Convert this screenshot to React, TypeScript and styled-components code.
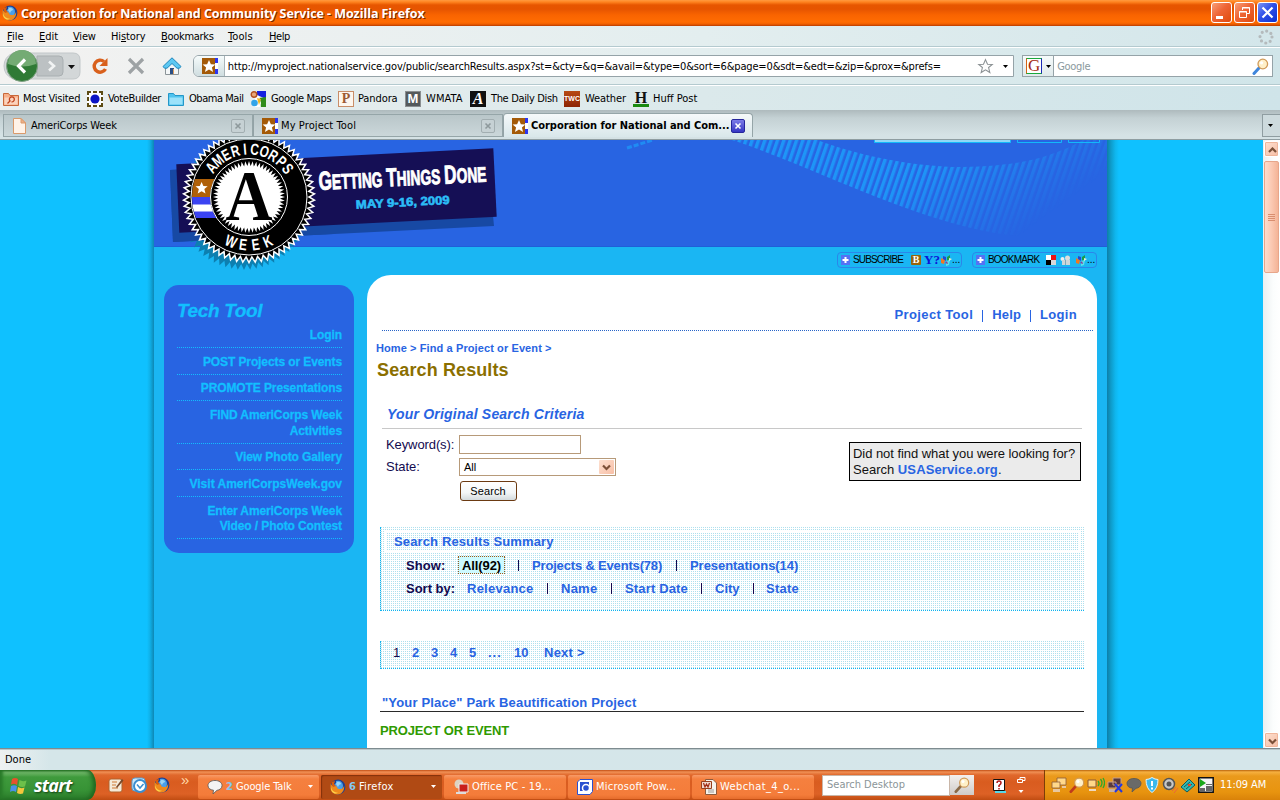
import React from "react";
import styled, { createGlobalStyle, css } from "styled-components";

const ui = `"DejaVu Sans Condensed", "DejaVu Sans", "Liberation Sans", sans-serif`;
const arial = `"Liberation Sans", Arial, sans-serif`;

const Global = createGlobalStyle`
  * { box-sizing: border-box; }
  body { margin: 0; background: #0fc1ff; overflow: hidden; }
  svg { display: block; flex: none; }
`;

const Screen = styled.div`
  width: 1280px;
  height: 800px;
  display: flex;
  flex-direction: column;
  overflow: hidden;
  font: 11px/14px ${ui};
  color: #000;
  white-space: nowrap;
`;

const Label = styled.span<{ $ls?: number }>`
  letter-spacing: ${(p) => p.$ls ?? 0}px;
  flex: none;
`;

/* ---------- Title bar ---------- */
const TitleBar = styled.header`
  height: 26px;
  flex: none;
  display: flex;
  align-items: center;
  padding: 0 2px 0 2px;
  background: linear-gradient(#ff9a40 0, #ff8420 2px, #e75600 5px, #e65400 9px, #f96400 15px, #ff6c02 22px, #f26000 24px, #b93c00 26px);
`;
const TitleText = styled.h1<{ $ls: number }>`
  flex: 1;
  margin: 2px 0 0 3px;
  font: bold 12.5px/20px "Open Sans", sans-serif;
  letter-spacing: ${(p) => p.$ls}px;
  color: #fff;
  text-shadow: 1px 1px 0 #7a2600;
`;
const WinButtons = styled.div`
  display: flex;
  gap: 2px;
  margin-bottom: 1px;
`;
const WinButton = styled.div<{ $blue?: boolean }>`
  width: 21px;
  height: 21px;
  border: 1px solid #fff;
  border-radius: 3px;
  background: ${(p) =>
    p.$blue
      ? "linear-gradient(135deg, #7d95f5, #2f50e8 45%, #0c31d0)"
      : "linear-gradient(135deg, #f8a078, #ee6536 45%, #e04a0c)"};
`;

/* ---------- Menu and toolbars ---------- */
const MenuBar = styled.nav`
  height: 21px;
  flex: none;
  display: flex;
  align-items: center;
  padding: 1px 6px 0 7px;
  background: linear-gradient(90deg, #f3f2f1, #e3eeef 55%, #d3e6ea);
  border-bottom: 1px solid #b4cacf;
`;
const MenuItem = styled.span<{ $w: number; $ls: number }>`
  width: ${(p) => p.$w}px;
  letter-spacing: ${(p) => p.$ls}px;
`;
const Throbber = styled.div`
  margin-left: auto;
`;
const NavBar = styled.div`
  height: 38px;
  flex: none;
  display: flex;
  align-items: center;
  padding: 0 7px 0 3px;
  background: linear-gradient(90deg, #f3f2f1, #e3eeef 55%, #d0e5e9);
  border-top: 1px solid #fff;
  border-bottom: 1px solid #b4cacf;
`;
const ToolIcon = styled.div<{ $w: number }>`
  width: ${(p) => p.$w}px;
  display: flex;
`;
const UrlBar = styled.div`
  width: 822px;
  height: 22px;
  display: flex;
  align-items: center;
  border: 1px solid #95a3a8;
  border-radius: 6px 0 0 6px;
  background: #fff;
  overflow: hidden;
`;
const Identity = styled.div`
  width: 31px;
  height: 20px;
  padding: 2px 0 0 8px;
  border-right: 1px solid #a9b4b8;
  background: linear-gradient(#f6fbfb, #cfdde0);
`;
const UrlText = styled.span<{ $ls: number }>`
  flex: 1;
  padding: 2px 0 0 3px;
  letter-spacing: ${(p) => p.$ls}px;
`;
const SearchBox = styled.div`
  width: 251px;
  height: 22px;
  margin-left: 8px;
  display: flex;
  align-items: center;
  border: 1px solid #95a3a8;
  background: #fff;
  color: #8a999d;
`;
const Engine = styled.div`
  width: 31px;
  height: 20px;
  display: flex;
  align-items: center;
  gap: 4px;
  padding-left: 3px;
  border-right: 1px solid #95a3a8;
  background: linear-gradient(#f6fbfb, #dfe9eb);
`;
const EngineLogo = styled.span`
  width: 16px;
  height: 16px;
  border: 1px solid;
  border-color: #19a83c #1a29b5 #19a83c #d46414;
  background: #fff;
  color: #a32a12;
  font: 17px/14px "Liberation Serif", serif;
  text-align: center;
`;
const BookmarkBar = styled.div`
  height: 25px;
  flex: none;
  display: flex;
  align-items: center;
  padding: 1px 0 0 3px;
  background: linear-gradient(90deg, #ecf0f0, #dbe9eb 55%, #cfe4e9);
  border-top: 1px solid #fff;
`;
const Bookmark = styled.a<{ $w: number; $ls: number; $gap?: number }>`
  width: ${(p) => p.$w}px;
  height: 18px;
  display: flex;
  align-items: center;
  gap: ${(p) => p.$gap ?? 5}px;
  letter-spacing: ${(p) => p.$ls}px;
`;
const LetterIcon = styled.b<{ $bg: string; $fg: string; $font: string; $line?: string }>`
  width: 16px;
  height: 16px;
  flex: none;
  background: ${(p) => p.$bg};
  color: ${(p) => p.$fg};
  font: ${(p) => p.$font};
  letter-spacing: 0;
  text-align: center;
  box-shadow: inset 0 0 0 1px ${(p) => p.$line ?? "transparent"};
`;
const HuffIcon = styled(LetterIcon)`
  border-bottom: 3px solid #198a10;
`;

/* ---------- Tabs ---------- */
const TabStrip = styled.div`
  height: 30px;
  flex: none;
  display: flex;
  align-items: flex-end;
  padding: 0 0 2px 3px;
  background: linear-gradient(#aebabd, #c4d1d4 8px, #d5e2e5 25px);
  border-bottom: 1px solid #8f9da1;
`;
const Tab = styled.div<{ $active?: boolean }>`
  width: 250px;
  height: 23px;
  display: flex;
  align-items: center;
  padding: 0 7px 0 8px;
  border: 1px solid #95a5a8;
  border-left-color: #93a2a6;
  background: linear-gradient(#b9c6c9, #cbd7da);
  ${(p) =>
    p.$active &&
    css`
      height: 24px;
      border-bottom: 0;
      border-radius: 4px 4px 0 0;
      background: linear-gradient(#f5f9fa, #d9e7ea);
      font-weight: bold;
    `}
`;
const TabText = styled.span<{ $ls: number; $pl?: number }>`
  flex: 1;
  padding: 1px 0 0 ${(p) => p.$pl ?? 3}px;
  letter-spacing: ${(p) => p.$ls}px;
`;
const TabList = styled.div`
  width: 18px;
  height: 23px;
  margin-left: auto;
  padding: 9px 0 0 5px;
  border: 1px solid #8f9da1;
  border-right: 0;
  background: #cddadd;
`;
const CloseIcon = styled.span<{ $active?: boolean }>`
  width: 14px;
  height: 14px;
  border: 1px solid ${(p) => (p.$active ? "#26269c" : "#a2aeb1")};
  border-radius: 2px;
  background: ${(p) => (p.$active ? "linear-gradient(#7c7ce8, #3636c4)" : "#c6d1d4")};
`;

/* ---------- Page ---------- */
const Viewport = styled.div`
  height: 608px;
  flex: none;
  display: flex;
  background: #0fc1ff;
`;
const Canvas = styled.div`
  width: 1263px;
  display: flex;
  overflow: hidden;
`;
const Edge = styled.div<{ $right?: boolean }>`
  width: ${(p) => (p.$right ? 12 : 7)}px;
  margin-left: ${(p) => (p.$right ? 0 : 147)}px;
  background: ${(p) =>
    p.$right
      ? "linear-gradient(90deg, #0d7fa8, #0e9dcc 35%, #0fb6ee 70%, #0fc1ff)"
      : "linear-gradient(90deg, #0fc1ff, #0fb2ea 40%, #0e87b4)"};
`;
const Wrapper = styled.div`
  width: 953px;
  height: 700px;
  position: relative;
  background: #1ab6f3;
`;
const Hero = styled.div`
  height: 107px;
  background: #2864e2;
  border-bottom: 1px solid #1f5fd8;
`;
const Badge = styled.svg`
  position: absolute;
  left: 0;
  top: 0;
`;
const ShareRow = styled.div`
  height: 28px;
  display: flex;
  justify-content: flex-end;
  gap: 10px;
  padding: 5px 10px 0 0;
`;
const ShareButton = styled.div`
  width: 125px;
  height: 16px;
  display: flex;
  align-items: center;
  padding-left: 3px;
  border: 1px solid #2b86ea;
  border-radius: 4px;
  font: 10px/14px ${arial};
`;
const ShareText = styled.span<{ $ls: number }>`
  width: 61px;
  padding-left: 3px;
  letter-spacing: ${(p) => p.$ls}px;
`;
const FeedIcons = styled.span`
  width: 29px;
  height: 14px;
  display: flex;
  align-items: center;
  gap: 3px;
  font: bold 13px/14px "Liberation Serif", serif;
  color: #0a14d8;
`;
const BIcon = styled.b`
  width: 10px;
  height: 10px;
  border-radius: 1px;
  background: #96640c;
  color: #fff;
  font: bold 10px/10px "Liberation Serif", serif;
  text-align: center;
`;
const Columns = styled.div`
  display: flex;
  align-items: flex-start;
  padding-left: 10px;
  gap: 13px;
`;
const Side = styled.aside`
  width: 190px;
  height: 268px;
  margin-top: 10px;
  padding: 12px 12px 0 13px;
  border-radius: 15px;
  background: #2864e2;
  color: #12bfff;
  font: bold 12px/16px ${arial};
`;
const SideTitle = styled.h2`
  margin: 0;
  font: italic bold 19px/28px ${arial};
  letter-spacing: -0.35px;
  -webkit-text-stroke: 0.3px #12bfff;
`;
const SideItem = styled.a<{ $h: number; $lh?: number; $ls?: number }>`
  display: flex;
  flex-direction: column;
  justify-content: flex-end;
  height: ${(p) => p.$h}px;
  line-height: ${(p) => p.$lh ?? 16}px;
  padding-bottom: 5px;
  text-align: right;
  letter-spacing: ${(p) => p.$ls ?? -0.1}px;
  -webkit-text-stroke: 0.3px #12bfff;
  background: repeating-linear-gradient(90deg, #12bfff 0 1px, transparent 1px 2px) bottom / 100% 1px no-repeat;
`;
const Main = styled.main`
  width: 730px;
  height: 520px;
  border-radius: 24px 24px 0 0;
  background: #fff;
  color: #120a4f;
  font: 13px/16px ${arial};
`;
const TopNav = styled.nav`
  height: 56px;
  margin: 0 4px 0 15px;
  display: flex;
  justify-content: flex-end;
  align-items: flex-end;
  gap: 9px;
  padding: 0 16px 8px 0;
  font-weight: bold;
  color: #2864e2;
  background: repeating-linear-gradient(90deg, #2864c8 0 1px, transparent 1px 2px) bottom / 100% 1px no-repeat;
`;
const NavSep = styled.span`
  width: 1px;
  height: 12px;
  margin-bottom: 1px;
  background: #2864e2;
`;
const Crumbs = styled.div`
  margin: 10px 0 0 9px;
  font: bold 11px/14px ${arial};
  letter-spacing: 0.1px;
  color: #2864e2;
`;
const PageTitle = styled.h2`
  margin: 3px 0 0 10px;
  font: bold 18px/24px ${arial};
  letter-spacing: 0.12px;
  color: #8b6f00;
`;
const Criteria = styled.h3`
  height: 25px;
  margin: 22px 15px 0 15px;
  padding-left: 5px;
  border-bottom: 1px solid #c8c8c8;
  font: italic bold 14px/20px ${arial};
  letter-spacing: 0.2px;
  color: #2864e2;
`;
const FormArea = styled.div`
  height: 98px;
  display: flex;
  justify-content: space-between;
  padding: 6px 16px 0 19px;
`;
const FormRow = styled.div<{ $h: number; $mb: number }>`
  height: ${(p) => p.$h}px;
  margin-bottom: ${(p) => p.$mb}px;
  display: flex;
  align-items: center;
`;
const FormLabel = styled.label<{ $ls?: number }>`
  width: 73px;
  letter-spacing: ${(p) => p.$ls ?? -0.1}px;
`;
const TextInput = styled.div`
  width: 122px;
  height: 19px;
  border: 1px solid #b79a79;
`;
const Select = styled.div`
  width: 157px;
  height: 18px;
  display: flex;
  align-items: center;
  justify-content: space-between;
  padding: 0 1px 0 4px;
  border: 1px solid #b79a79;
  font: 11px/14px ${arial};
  color: #000;
`;
const ArrowBox = styled.span`
  width: 15px;
  height: 14px;
  padding: 4px 0 0 3px;
  border-radius: 1px;
  background: linear-gradient(135deg, #fde0d0, #f8bfa6);
`;
const Button = styled.button`
  width: 57px;
  height: 20px;
  margin-left: 74px;
  padding: 0 1px 0 0;
  border: 1px solid #6b3a12;
  border-radius: 3px;
  background: linear-gradient(#fff, #f3f6f7 60%, #d3dadd);
  font: 11px/16px ${arial};
  letter-spacing: 0.1px;
  color: #000;
`;
const Notice = styled.div`
  width: 232px;
  height: 39px;
  margin-top: 7px;
  padding: 3px;
  border: 1px solid #000;
  background: #ebebeb;
  color: #111;
`;
const Link = styled.a<{ $ls?: number }>`
  color: #2864e2;
  font-weight: bold;
  letter-spacing: ${(p) => p.$ls ?? 0}px;
`;
const dots = css`
  background-color: #fff;
  background-image:
    repeating-linear-gradient(90deg, transparent 0 1px, #fff 1px 2px),
    repeating-linear-gradient(#aee0ee 0 1px, #fff 1px 2px);
`;
const DotBox = styled.section<{ $h: number; $mb: number; $pt?: number }>`
  ${dots}
  width: 704px;
  height: ${(p) => p.$h}px;
  margin: 0 0 ${(p) => p.$mb}px 13px;
  padding: ${(p) => p.$pt ?? 0}px 0 0 3px;
  border-bottom: 1px dotted #10b4f0;
  border-left: 1px dotted #10b4f0;
`;
const BoxTitle = styled.h4`
  width: 697px;
  height: 21px;
  margin: 0 0 2px;
  padding-left: 8px;
  border: 2px solid #fff;
  font: bold 13px/17px ${arial};
  letter-spacing: 0.13px;
  color: #2864e2;
`;
const FilterRow = styled.div`
  height: 23px;
  display: flex;
  align-items: center;
  padding-left: 22px;
  font-weight: bold;
`;
const Cell = styled.span<{ $w: number; $ls?: number; $link?: boolean }>`
  width: ${(p) => p.$w}px;
  letter-spacing: ${(p) => p.$ls ?? 0.25}px;
  color: ${(p) => (p.$link ? "#2864e2" : "#120a4f")};
`;
const PageNow = styled(Cell)`
  font-weight: normal;
`;
const Bar = styled.span<{ $w: number }>`
  width: ${(p) => p.$w}px;
  height: 11px;
  border-left: 1px solid #120a4f;
`;
const Current = styled.span`
  width: 47px;
  height: 18px;
  margin: 0 13px 1px 0;
  padding-left: 3px;
  border: 1px dotted #9c5a1c;
  background: #cdfaff;
  color: #000;
  line-height: 18px;
  letter-spacing: -0.1px;
`;
const Pager = styled.div`
  height: 24px;
  display: flex;
  align-items: center;
  padding-left: 9px;
  font-weight: bold;
`;
const ResultTitle = styled.h4`
  width: 704px;
  height: 17px;
  margin: 0 0 0 13px;
  padding-left: 2px;
  border-bottom: 1px solid #2a2a2a;
  font: bold 13px/16px ${arial};
  letter-spacing: 0.17px;
  color: #2864e2;
`;
const ResultKind = styled.div`
  margin: 11px 0 0 13px;
  font-weight: bold;
  letter-spacing: -0.15px;
  color: #2f9a00;
`;

/* ---------- Scrollbar ---------- */
const Scrollbar = styled.div`
  width: 17px;
  display: flex;
  flex-direction: column;
  padding: 1px 1px 0 1px;
  background: linear-gradient(90deg, #eceff0, #fbfdfd 60%, #fff);
`;
const ScrollButton = styled.div`
  height: 16px;
  padding: 5px 0 0 3px;
  border: 1px solid #fff;
  border-radius: 2px;
  background: linear-gradient(135deg, #fde0d0, #f6bda4);
  box-shadow: inset 0 0 0 1px #efb59a;
`;
const Thumb = styled.div`
  height: 112px;
  margin: 4px 0 auto;
  display: flex;
  flex-direction: column;
  align-items: center;
  justify-content: center;
  gap: 1px;
  border: 1px solid #e7a68b;
  border-radius: 2px;
  background: linear-gradient(90deg, #fddccb, #fbc9b3 50%, #f4b497);
`;
const Grip = styled.span`
  width: 7px;
  height: 1px;
  background: #d98e70;
`;

/* ---------- Status bar ---------- */
const StatusBar = styled.footer`
  height: 22px;
  flex: none;
  padding: 4px 0 0 5px;
  border-top: 1px solid #7e8c90;
  background: linear-gradient(90deg, #eef1f1, #d5e6e9 50px, #d5e6ea);
  box-shadow: inset 0 1px 0 #b9c7ca;
`;

/* ---------- Taskbar ---------- */
const Taskbar = styled.div`
  height: 30px;
  flex: none;
  display: flex;
  align-items: center;
  color: #fff;
  background: linear-gradient(#c24e14 0, #f09055 2px, #e0682c 5px, #d95c1f 12px, #dd6125 24px, #c04c12 30px);
`;
const Start = styled.div`
  width: 96px;
  height: 30px;
  display: flex;
  align-items: center;
  padding: 0 0 0 10px;
  gap: 6px;
  border-radius: 0 9px 9px 0 / 0 15px 15px 0;
  background: linear-gradient(#2a7a26 0, #78bd70 2px, #3f9a3c 7px, #379336 20px, #2a7a2a 30px);
  box-shadow: inset -3px 0 4px #1f661f, inset 3px 0 3px #2b7e2b;
  font: italic bold 18px/22px "Open Sans", sans-serif;
  text-shadow: 1px 1px 2px #123f12;
`;
const QuickLaunch = styled.div`
  width: 102px;
  height: 30px;
  display: flex;
  align-items: center;
  gap: 7px;
  padding-left: 12px;
`;
const Chevrons = styled.span`
  margin: -10px 0 0 4px;
  font: 15px/14px ${arial};
  color: #ffd9a8;
`;
const TaskButton = styled.div<{ $w: number; $active?: boolean }>`
  width: ${(p) => p.$w}px;
  height: 24px;
  margin: 3px 2px 0 0;
  display: flex;
  align-items: center;
  gap: 3px;
  padding: 0 6px 0 9px;
  border-radius: 2px;
  background: ${(p) =>
    p.$active ? "#b04a14" : "linear-gradient(#f79a68, #f5803f 4px, #f47c3a 20px, #e56c2c)"};
  box-shadow: ${(p) => (p.$active ? "inset 1px 1px 1px #83310a" : "none")};
`;
const Count = styled.b`
  color: #86c8f0;
`;
const Push = styled.span`
  margin-left: auto;
`;
const DesktopSearch = styled.div`
  width: 128px;
  height: 21px;
  margin-left: 6px;
  padding: 2px 4px;
  background: #fff;
  border: 1px solid #c9b6a8;
  color: #8b9598;
`;
const SearchGo = styled.div`
  width: 24px;
  height: 20px;
  padding: 2px 4px;
  background: linear-gradient(#f3f0ee, #cfcbc8);
`;
const Langbar = styled.div`
  flex: 1;
  display: flex;
  align-items: center;
  gap: 11px;
  padding-left: 18px;
`;
const Tray = styled.div`
  width: 236px;
  height: 30px;
  display: flex;
  align-items: center;
  gap: 2px;
  padding-left: 6px;
  border-left: 1px solid #7c3d08;
  background: linear-gradient(#b9640c 0, #f6b040 2px, #ea9a1c 6px, #e8940f 22px, #d98209 30px);
`;
const Clock = styled.span<{ $ls: number }>`
  margin-left: 4px;
  letter-spacing: ${(p) => p.$ls}px;
`;

/* ---------- Icons ---------- */
const Firefox = ({ s = 16 }: { s?: number }) => (
  <svg width={s} height={s} viewBox="0 0 16 16">
    <circle cx="8" cy="8" r="7.4" fill="#1a3f94" />
    <path d="M6 2c4-1 7 1 7 5 0 3-2 5-4 5s-5-1-5-4 1-3 2-4z" fill="#4aa0ea" />
    <path d="M7 3c2-.6 4 .5 4 2L9 6 8 8 6 5z" fill="#9ad4f5" />
    <path d="M1 4c0 2 1 3 3 3 1 0 3 0 3 1 0 2 2 2 4 2 2-.5 3-2 3-4 1 5-2 9.4-6.500 9.400C3 15.400.2 12 .4 8 .4 6.500.8 5 1 4z" fill="#f08a1c" />
    <path d="M1.200 8c.5 4 4 6 7 5.600-3 2.400-8 0-7-5.600z" fill="#ffd24a" />
    <path d="M2 3l3-1-1 3 2 2-3 1-1-2z" fill="#d95d0c" />
  </svg>
);
const starPath = "M8 1.500l1.900 4.300 4.500.3-3.500 2.900 1.200 4.700L8 11.200l-4.100 2.500 1.200-4.700L1.600 6.100l4.500-.3z";
const CorpsIcon = () => (
  <svg width="16" height="16">
    <path d="M0 0h13v16H0z" fill="#a45a08" />
    <path d="M13 0h3v5h-3zM13 11h3v5h-3z" fill="#2d35f0" />
    <path d="M13 5h3v6h-3z" fill="#fff" />
    <path d={starPath} transform="translate(-1 .4)" fill="#fff" />
  </svg>
);
const Caret = ({ c = "#000" }: { c?: string }) => (
  <svg width="5" height="3">
    <path d="M0 0h5L2.500 3z" fill={c} />
  </svg>
);
const Cross = ({ c }: { c: string }) => (
  <svg width="12" height="12">
    <path d="M3.500 3.500l5 5m0-5l-5 5" stroke={c} strokeWidth="1.600" />
  </svg>
);
const ChevronDown = ({ up }: { up?: boolean }) => (
  <svg width="9" height="7" viewBox="0 0 9 7">
    <path d={up ? "M1 5l3.500-3.500L8 5" : "M1 1.500L4.500 5 8 1.500"} stroke="#7c5038" strokeWidth="2.200" fill="none" />
  </svg>
);
const Magnifier = ({ handle, s = 17 }: { handle: string; s?: number }) => (
  <svg width={s} height={s} viewBox="0 0 17 17">
    <path d="M7 10l-5 5.500" stroke={handle} strokeWidth="3" strokeLinecap="round" />
    <circle cx="10.800" cy="6" r="4.800" fill="#fff0c8" stroke="#d09a58" strokeWidth="1.300" />
    <circle cx="9.600" cy="4.800" r="1.600" fill="#fff" />
  </svg>
);
const Folder = ({ warm }: { warm?: boolean }) => (
  <svg width="16" height="16">
    <path d="M.5 14.500v-12h5l1.500 2h8.500v10z" fill={warm ? "#f7b08a" : "#4fc3ee"} stroke={warm ? "#c9683a" : "#2397c8"} />
    <path d="M1.500 6.500h13v7h-13z" fill={warm ? "#fbd3bd" : "#9be2fa"} />
    {warm && <path d="M4.500 12.500L7 10a2.500 2.500 0 1 1 1.500.8" fill="none" stroke="#c0431c" strokeWidth="1.300" />}
  </svg>
);
const VoteIcon = () => (
  <svg width="16" height="16">
    <path d="M0 0h16v16H0z" fill="#fff" />
    <path d="M0 0h4v2H2v2H0zM6 0h4v2H6zM12 0h4v4h-2V2h-2zM0 6h2v4H0zM14 6h2v4h-2zM0 12h2v2h2v2H0zM6 14h4v2H6zM14 12h2v4h-4v-2h2z" fill="#5d4c14" />
    <circle cx="8" cy="8" r="4.600" fill="#0c14c4" />
  </svg>
);
const MapsIcon = () => (
  <svg width="16" height="16">
    <path d="M7 0h9v8L7 4z" fill="#1420e0" />
    <path d="M9 7l7-1v10h-5z" fill="#2f8c1c" />
    <path d="M5 4l4 1 2 7-1 4H4z" fill="#fff" />
    <circle cx="4" cy="3.500" r="2.800" fill="#e8a878" stroke="#b3501c" strokeWidth="1.400" />
    <circle cx="4.500" cy="12" r="3.300" fill="#32a4e8" />
    <path d="M7 7l4 1-2 6z" fill="#f2b61c" />
  </svg>
);
const PageIcon = () => (
  <svg width="14" height="16">
    <path d="M1.500.5H9l4.500 4.500v10.500h-12z" fill="#fff3e8" stroke="#d99a6c" />
    <path d="M9 .5V5h4.500z" fill="#f0b088" stroke="#d99a6c" />
  </svg>
);
const Bubble = ({ f }: { f: string }) => (
  <svg width="16" height="16">
    <path d="M8 1.500c4 0 7 2 7 5s-2.500 4.500-5 4.800L6 15l.5-3.800C3 11 1 9 1 6.500c0-3 3-5 7-5z" fill={f} stroke="#555" strokeWidth=".8" />
  </svg>
);
const Plus = () => (
  <svg width="9" height="10">
    <path d="M0 0h9v10H0z" fill="#5472f4" />
    <path d="M4.500 2v6M1.500 5h6" stroke="#fff" strokeWidth="2" />
  </svg>
);
const Butterfly = () => (
  <svg width="12" height="11">
    <path d="M1 3l4 2-1 4-3-1z" fill="#f07820" />
    <path d="M3 1l3 1v4L3 4z" fill="#2848d0" />
    <path d="M7 2l3-2v4L7 6z" fill="#1c9c48" />
    <path d="M6 6l4-1-1 5-3 1z" fill="#5ce0e8" />
    <path d="M9 3l3 1-3 2z" fill="#e8f0d0" />
    <path d="M5 8l2-2 1 3z" fill="#8a3a9c" />
  </svg>
);
const Dual = ({ a, b }: { a: string; b: string }) => (
  <svg width="16" height="16">
    <path d="M6 1h9v7H6z" fill={a} stroke="#8c5a38" strokeWidth=".8" />
    <path d="M1 5h8v6H1z" fill={a} stroke="#8c5a38" strokeWidth=".8" />
    <path d="M2 12h7v3H2zM11 9h4v2h-4z" fill={b} />
  </svg>
);

/* ---------- Hero artwork ---------- */
const CX = 95;
const CY = 57;
const burst = (n: number, outer: number, inner: number) =>
  Array.from({ length: n * 2 }, (_, i) => {
    const a = (Math.PI * i) / n;
    const r = i % 2 ? inner : outer;
    return `${(CX + r * Math.sin(a)).toFixed(2)},${(CY - r * Math.cos(a)).toFixed(2)}`;
  }).join(" ");
const polar = (r: number, deg: number) => {
  const a = (deg * Math.PI) / 180;
  return `${CX + r * Math.sin(a)} ${CY - r * Math.cos(a)}`;
};

/* Condensed lettering set around the seal, one letter per angle. */
const ArcLetters = ({ word, from, to, r, flip }: { word: string; from: number; to: number; r: number; flip?: boolean }) => (
  <g>
    {word.split("").map((ch, i) => {
      const deg = from + ((to - from) * i) / (word.length - 1);
      const rot = flip ? deg - 180 : deg;
      return (
        <text
          key={i}
          textAnchor="middle"
          transform={`translate(${polar(r, deg)}) rotate(${rot}) scale(.74 1)`}
        >
          {ch}
        </text>
      );
    })}
  </g>
);

const HeroArt = () => (
  <Badge width="953" height="135" viewBox="0 0 953 135">
    <defs>
      <pattern id="stripes" width="6" height="20" patternUnits="userSpaceOnUse" patternTransform="rotate(19)">
        <path d="M0 0h3.400v20H0z" fill="#1e97f8" />
      </pattern>
      <linearGradient id="fade" x1="0" x2="1" y1="0" y2=".3">
        <stop offset="0" stopColor="#fff" />
        <stop offset=".65" stopColor="#fff" stopOpacity=".95" />
        <stop offset=".92" stopColor="#fff" stopOpacity=".22" />
        <stop offset="1" stopColor="#fff" stopOpacity="0" />
      </linearGradient>
      <mask id="waveFade">
        <path d="M470 0h483v106H470z" fill="url(#fade)" />
      </mask>
      <clipPath id="ring">
        <path
          clipRule="evenodd"
          d={`M${CX - 57} ${CY}a57 57 0 1 0 114 0a57 57 0 1 0-114 0zM${CX - 39} ${CY}a39 39 0 1 1 78 0a39 39 0 1 1-78 0z`}
        />
      </clipPath>
    </defs>
    <path
      mask="url(#waveFade)"
      fill="url(#stripes)"
      d="M578 0C630 17 700 50 763 72C806 87 850 98 890 97C920 92 945 60 953 20V0H929C890 22 850 27 799 27C750 25 700 14 663 0z"
    />
    <path d="M473 8l26-8" stroke="#1e97f8" strokeWidth="3" strokeDasharray="5 2" opacity=".8" />
    <path d="M720.500-1v3.500h136V-1z" fill="#8fd6f6" stroke="#12b9fa" />
    <path d="M863.500-1v3.500h44V-1M914.500-1v3.500h31V-1" fill="none" stroke="#12b9fa" />

    <path d="M16 30l317-16 7 72-321 16z" fill="#1749a4" />
    <polygon points={burst(66, 66, 60)} transform="translate(-5 7)" fill="#0d7fb0" />
    <path d="M16 30l163-8v72L19 102z" fill="#1749a4" />
    <path d="M22.300 24.300L339.300 8.300 342.700 76.700 25.300 92.700z" fill="#150f55" />
    <polygon points={burst(66, 65.5, 60)} fill="#000" stroke="#fff" strokeWidth="1.500" />
    <circle cx={CX} cy={CY} r="58" fill="#000" stroke="#fff" strokeWidth="1" />
    <g clipPath="url(#ring)">
      <path d="M30 39h32v18H30z" fill="#b06008" />
      <path d="M30 57h32v21H30z" fill="#3b43f2" />
      <path d="M30 64.500h32v7H30z" fill="#fff" />
      <path d={starPath} transform="translate(40 40.500) scale(.95)" fill="#fff" />
    </g>
    <circle cx={CX} cy={CY} r="38.500" fill="#000" stroke="#fff" />
    <polygon points={burst(60, 36, 31)} fill="#fff" />
    <text x={CX} y="79.500" textAnchor="middle" textLength="47" lengthAdjust="spacingAndGlyphs" fontFamily="Liberation Serif, serif" fontWeight="bold" fontSize="71">
      A
    </text>
    <g fill="#fff" fontFamily="Liberation Sans, sans-serif" fontWeight="bold" fontSize="16">
      <ArcLetters word="AMERICORPS" from={-52} to={54} r={42.5} />
      <ArcLetters word="WEEK" from={202} to={157} r={53.5} flip />
    </g>
    <g transform="rotate(-2.900 165 50)">
      <text x="165" y="50" textLength="168" lengthAdjust="spacingAndGlyphs" fill="#fff" stroke="#fff" strokeWidth=".9" fontFamily="Liberation Sans, sans-serif" fontWeight="bold" fontSize="21">
        <tspan fontSize="26">G</tspan>ETTING <tspan fontSize="26">T</tspan>HINGS <tspan fontSize="26">D</tspan>ONE
      </text>
      <text x="201" y="70.500" textLength="94" lengthAdjust="spacingAndGlyphs" fill="#2cbdf7" stroke="#2cbdf7" strokeWidth=".6" fontFamily="Liberation Sans, sans-serif" fontWeight="bold" fontSize="12">
        MAY 9-16, 2009
      </text>
    </g>
  </Badge>
);

const menus: [string, string, number, number][] = [
  ["F", "ile", 32, 0],
  ["E", "dit", 34, 0],
  ["V", "iew", 38, -0.2],
  ["Hi|s", "tory", 50, -0.1],
  ["B", "ookmarks", 67, -0.3],
  ["T", "ools", 41, 0.1],
  ["H", "elp", 40, -0.4],
];

export default function App() {
  return (
    <Screen>
      <Global />
      <TitleBar>
        <Firefox />
        <TitleText $ls={-0.06}>Corporation for National and Community Service - Mozilla Firefox</TitleText>
        <WinButtons>
          <WinButton>
            <svg width="19" height="19"><path d="M4 13h7v3H4z" fill="#fff" /></svg>
          </WinButton>
          <WinButton>
            <svg width="19" height="19">
              <path d="M4.500 8.500h7v6h-7zM4 9h8M7.500 7V4.500h7v6H12M7 5h8" fill="none" stroke="#fff" />
            </svg>
          </WinButton>
          <WinButton $blue>
            <svg width="19" height="19"><path d="M4.500 4.500l10 10m0-10l-10 10" stroke="#fff" strokeWidth="2.200" /></svg>
          </WinButton>
        </WinButtons>
      </TitleBar>

      <MenuBar>
        {menus.map(([a, b, w, ls]) => {
          const [pre, key] = a.includes("|") ? a.split("|") : ["", a];
          return (
            <MenuItem key={b} $w={w} $ls={ls}>
              {pre}
              <u>{key}</u>
              {b}
            </MenuItem>
          );
        })}
        <Throbber>
          <svg width="16" height="16">
            <circle cx="8" cy="8" r="6" fill="none" stroke="#b4babc" strokeWidth="3.200" strokeLinecap="round" strokeDasharray="0 4.712" />
          </svg>
        </Throbber>
      </MenuBar>

      <NavBar>
        <ToolIcon $w={88}>
          <svg width="80" height="34">
            <path d="M10 4h60q7 0 7 7v12q0 7-7 7H10q-9-4-9-13t9-13z" fill="#d3d7d8" stroke="#c2c7c9" />
            <path d="M34 7h22q4 0 4 4v12q0 4-4 4H34z" fill="#bcc1c3" stroke="#a9afb1" />
            <path d="M46 12.500l5 4.500-5 4.500" fill="none" stroke="#f1f3f3" strokeWidth="2.600" />
            <circle cx="19" cy="17" r="15.500" fill="#2f7a35" stroke="#7fa183" />
            <path d="M5 15a14 14 0 0 1 28 0q-14 5-28 0z" fill="#74ab74" />
            <path d="M22 10.500L15.500 17l6.500 6.500" fill="none" stroke="#fff" strokeWidth="3.200" />
            <path d="M65 16h7l-3.500 4z" fill="#111" />
          </svg>
        </ToolIcon>
        <ToolIcon $w={36}>
          <svg width="18" height="18">
            <path d="M13 4.500A6 6 0 1 0 14.500 12" fill="none" stroke="#d9601c" strokeWidth="3.400" />
            <path d="M16.500 1v8H8.500z" fill="#d9601c" />
          </svg>
        </ToolIcon>
        <ToolIcon $w={35}>
          <svg width="18" height="18"><path d="M2 2l14 14m0-14L2 16" stroke="#9da2a4" strokeWidth="3.200" /></svg>
        </ToolIcon>
        <ToolIcon $w={31}>
          <svg width="20" height="18">
            <path d="M3.500 9v8.500h13V9L10 4z" fill="#f4f7f8" stroke="#8b9498" />
            <path d="M10 .8l9 8.700-1.500 1.700H15l-5-4.700-5 4.700H2.500L1 9.500z" fill="#5cc8f2" stroke="#1f86bc" />
            <path d="M8 11h4v6H8z" fill="#2a4f86" />
            <path d="M11 12h1v5h-1z" fill="#e0a060" />
          </svg>
        </ToolIcon>
        <UrlBar>
          <Identity><CorpsIcon /></Identity>
          <UrlText $ls={-0.15}>
            http://myproject.nationalservice.gov/public/searchResults.aspx?st=&amp;cty=&amp;q=&amp;avail=&amp;type=0&amp;sort=6&amp;page=0&amp;sdt=&amp;edt=&amp;zip=&amp;prox=&amp;prefs=
          </UrlText>
          <ToolIcon $w={26}>
            <svg width="17" height="17" viewBox="0 0 16 16"><path d={starPath} fill="#fdfdfd" stroke="#8a9093" /></svg>
          </ToolIcon>
          <ToolIcon $w={10}><Caret /></ToolIcon>
        </UrlBar>
        <SearchBox>
          <Engine><EngineLogo>G</EngineLogo><Caret /></Engine>
          <UrlText $ls={-0.3}>Google</UrlText>
          <ToolIcon $w={20}><Magnifier handle="#3f86dc" /></ToolIcon>
        </SearchBox>
      </NavBar>

      <BookmarkBar>
        <Bookmark $w={84} $ls={-0.25} $gap={4}><Folder warm />Most Visited</Bookmark>
        <Bookmark $w={81} $ls={-0.35}><VoteIcon />VoteBuilder</Bookmark>
        <Bookmark $w={82} $ls={-0.45}><Folder />Obama Mail</Bookmark>
        <Bookmark $w={88} $ls={-0.35}><MapsIcon />Google Maps</Bookmark>
        <Bookmark $w={67} $ls={-0.1} $gap={4}>
          <LetterIcon $bg="#fdf6ee" $fg="#9c5a34" $font='bold 14px/16px "Liberation Serif", serif' $line="#c98d68">P</LetterIcon>Pandora
        </Bookmark>
        <Bookmark $w={65} $ls={0.1}>
          <LetterIcon $bg="#555a5c" $fg="#fff" $font={`bold 13px/16px ${arial}`} $line="#8a8f91">M</LetterIcon>WMATA
        </Bookmark>
        <Bookmark $w={94} $ls={-0.35}>
          <LetterIcon $bg="#111" $fg="#fff" $font='italic bold 16px/16px "Liberation Serif", serif'>A</LetterIcon>The Daily Dish
        </Bookmark>
        <Bookmark $w={69} $ls={-0.1}>
          <LetterIcon $bg="linear-gradient(#b84a14,#8c2404)" $fg="#fff" $font={`bold 7px/15px ${arial}`}>TWC</LetterIcon>Weather
        </Bookmark>
        <Bookmark $w={80} $ls={0} $gap={4}>
          <HuffIcon $bg="transparent" $fg="#111" $font='bold 16px/13px "Liberation Serif", serif'>H</HuffIcon>Huff Post
        </Bookmark>
      </BookmarkBar>

      <TabStrip>
        <Tab><PageIcon /><TabText $ls={-0.15} $pl={5}>AmeriCorps Week</TabText><CloseIcon><Cross c="#8e999c" /></CloseIcon></Tab>
        <Tab><CorpsIcon /><TabText $ls={0.1}>My Project Tool</TabText><CloseIcon><Cross c="#8e999c" /></CloseIcon></Tab>
        <Tab $active><CorpsIcon /><TabText $ls={-0.03}>Corporation for National and Com...</TabText><CloseIcon $active><Cross c="#fff" /></CloseIcon></Tab>
        <TabList><Caret /></TabList>
      </TabStrip>

      <Viewport>
        <Canvas>
          <Edge />
          <Wrapper>
            <Hero />
            <HeroArt />
            <ShareRow>
              <ShareButton>
                <Plus /><ShareText $ls={-0.85}>SUBSCRIBE</ShareText>
                <FeedIcons><BIcon>B</BIcon>Y?</FeedIcons>
                <Butterfly />...
              </ShareButton>
              <ShareButton>
                <Plus /><ShareText $ls={-0.8}>BOOKMARK</ShareText>
                <svg width="29" height="11">
                  <path d="M0 0h5v5H0z" fill="#fff" /><path d="M5 0h5v5H5z" fill="#f01010" />
                  <path d="M0 5h5v5H0z" fill="#000" /><path d="M5 5h5v5H5z" fill="#d8d8d8" />
                  <circle cx="16.500" cy="4" r="2" fill="#eee" /><circle cx="21.500" cy="3" r="2.500" fill="#ddd" />
                  <path d="M16 5h8v5h-8z" fill="#cfd6d8" /><path d="M19 5h1v5h-1z" fill="#7fa8b8" />
                </svg>
                <Butterfly />...
              </ShareButton>
            </ShareRow>
            <Columns>
              <Side>
                <SideTitle>Tech Tool</SideTitle>
                <SideItem $h={23}>Login</SideItem>
                <SideItem $h={27}>POST Projects or Events</SideItem>
                <SideItem $h={26}>PROMOTE Presentations</SideItem>
                <SideItem $h={43}><span>FIND AmeriCorps Week</span><span>Activities</span></SideItem>
                <SideItem $h={26}>View Photo Gallery</SideItem>
                <SideItem $h={27} $ls={0}>Visit AmeriCorpsWeek.gov</SideItem>
                <SideItem $h={42} $lh={15}><span>Enter AmeriCorps Week</span><span>Video / Photo Contest</span></SideItem>
              </Side>
              <Main>
                <TopNav>
                  <Label $ls={0.37}>Project Tool</Label><NavSep /><Label $ls={0.2}>Help</Label><NavSep /><Label $ls={0.3}>Login</Label>
                </TopNav>
                <Crumbs>Home &gt; Find a Project or Event &gt;</Crumbs>
                <PageTitle>Search Results</PageTitle>
                <Criteria>Your Original Search Criteria</Criteria>
                <FormArea>
                  <div>
                    <FormRow $h={19} $mb={4}><FormLabel>Keyword(s):</FormLabel><TextInput /></FormRow>
                    <FormRow $h={18} $mb={5}>
                      <FormLabel $ls={0}>State:</FormLabel>
                      <Select>All<ArrowBox><ChevronDown /></ArrowBox></Select>
                    </FormRow>
                    <Button>Search</Button>
                  </div>
                  <Notice>
                    <Label $ls={-0.05}>Did not find what you were looking for?</Label><br />
                    Search <Link $ls={0.13}>USAService.org</Link>.
                  </Notice>
                </FormArea>
                <DotBox $h={84} $mb={30} $pt={4}>
                  <BoxTitle>Search Results Summary</BoxTitle>
                  <FilterRow>
                    <Cell $w={52} $ls={0.1}>Show:</Cell><Current>All(92)</Current>
                    <Bar $w={14} /><Cell $w={144} $ls={-0.17} $link>Projects &amp; Events(78)</Cell>
                    <Bar $w={14} /><Cell $w={110} $ls={-0.05} $link>Presentations(14)</Cell>
                  </FilterRow>
                  <FilterRow>
                    <Cell $w={61} $ls={0}>Sort by:</Cell><Cell $w={80} $link>Relevance</Cell>
                    <Bar $w={14} /><Cell $w={50} $link>Name</Cell>
                    <Bar $w={14} /><Cell $w={76} $ls={0.15} $link>Start Date</Cell>
                    <Bar $w={14} /><Cell $w={38} $ls={0} $link>City</Cell>
                    <Bar $w={13} /><Cell $w={40} $link>State</Cell>
                  </FilterRow>
                </DotBox>
                <DotBox $h={28} $mb={26}>
                  <Pager>
                    <PageNow $w={19}>1</PageNow>
                    {["2", "3", "4", "5"].map((n) => <Cell key={n} $w={19} $link>{n}</Cell>)}
                    <Cell $w={26} $ls={1} $link>...</Cell><Cell $w={30} $ls={0} $link>10</Cell><Cell $w={50} $link>Next &gt;</Cell>
                  </Pager>
                </DotBox>
                <ResultTitle>"Your Place" Park Beautification Project</ResultTitle>
                <ResultKind>PROJECT OR EVENT</ResultKind>
              </Main>
            </Columns>
          </Wrapper>
          <Edge $right />
        </Canvas>
        <Scrollbar>
          <ScrollButton><ChevronDown up /></ScrollButton>
          <Thumb><Grip /><Grip /><Grip /><Grip /></Thumb>
          <ScrollButton><ChevronDown /></ScrollButton>
        </Scrollbar>
      </Viewport>

      <StatusBar>Done</StatusBar>

      <Taskbar>
        <Start>
          <svg width="18" height="18">
            <path d="M2 3q3-2 6 0L7 9Q4 7 1 8.500z" fill="#e8502c" />
            <path d="M9.500 4q3 2 7 .5L15 10.500q-3 1-6.500-.5z" fill="#6cc04a" />
            <path d="M1 10q3-1.500 6 0l-1 6q-3-2-6 0z" fill="#4a90e8" />
            <path d="M8 11q3 2 6.500.5L13 17.500q-3 1-6-.5z" fill="#f5c63c" />
          </svg>
          <Label $ls={-0.8}>start</Label>
        </Start>
        <QuickLaunch>
          <svg width="16" height="16">
            <rect x="1" y="2" width="13" height="13" rx="2" fill="#f4ead8" stroke="#b0622c" />
            <path d="M4 5h5M4 8h4M4 11h6" stroke="#d07a34" /><path d="M8 10l6-8 1.500 1.500L9 11z" fill="#7a4a2a" />
          </svg>
          <svg width="16" height="16">
            <rect x="1" y="1" width="13" height="13" rx="3" fill="#cfe6f8" stroke="#5b9fd0" />
            <circle cx="9" cy="9" r="6" fill="#fff" stroke="#3b8ed0" strokeWidth="2" /><path d="M6 7.500l3 3.500 3.500-4" stroke="#3b8ed0" strokeWidth="1.500" fill="none" />
          </svg>
          <Firefox />
          <Chevrons>»</Chevrons>
        </QuickLaunch>
        <TaskButton $w={121}><Bubble f="#f4f4f4" /><Count>2</Count><Label $ls={-0.1}>Google Talk</Label><Push><Caret c="#fff" /></Push></TaskButton>
        <TaskButton $w={121} $active><Firefox /><Count>6</Count><Label $ls={0.3}>Firefox</Label><Push><Caret c="#fff" /></Push></TaskButton>
        <TaskButton $w={122}>
          <svg width="16" height="16">
            <circle cx="6" cy="5" r="4.500" fill="#ddd3c4" /><path d="M6 5h9v8H6z" fill="#c8201c" stroke="#eee" /><path d="M3 13h10v2H3z" fill="#ddd" />
          </svg>
          <Label $ls={0.15}>Office PC - 19...</Label>
        </TaskButton>
        <TaskButton $w={122}>
          <svg width="16" height="16">
            <path d="M3 .5h12.500v12L13 15.500H.5V3z" fill="#fff" stroke="#2a50d0" /><path d="M3 3h9v9H3z" fill="#2a50d0" />
            <circle cx="9" cy="9" r="3.500" fill="#2a50d0" stroke="#fff" strokeWidth="1.500" />
          </svg>
          <Label $ls={0.25}>Microsoft Pow...</Label>
        </TaskButton>
        <TaskButton $w={122}>
          <svg width="16" height="16">
            <path d="M4.500.5H12L15.500 4v11.500h-11z" fill="#f7f3ec" stroke="#8c5a3c" /><path d="M7 11h6M7 13h6" stroke="#9a9a9a" />
            <path d="M.5 2.500h10v7H.5z" fill="#f0d8cc" stroke="#98401c" /><path d="M2.500 4l1.500 4 1.500-3L7 8l1.500-4" stroke="#a02c14" fill="none" strokeWidth="1.200" />
          </svg>
          <Label $ls={0.4}>Webchat_4_o...</Label>
        </TaskButton>
        <DesktopSearch>Search Desktop</DesktopSearch>
        <SearchGo><Magnifier handle="#8a6a48" s={16} /></SearchGo>
        <Langbar>
          <svg width="14" height="15">
            <path d="M1.500 1.500h11v11h-11z" fill="#fff" stroke="#111" /><path d="M3 13h11v2H3z" fill="#59d8e8" />
            <path d="M5 5q0-2 2-2t2 2q0 1-2 2.500V9M7 10v1.500" stroke="#b01818" strokeWidth="1.500" fill="none" />
          </svg>
          <svg width="9" height="18">
            <path d="M.5 3.500h5v3h-5zM3 3V1.500h5v3H6" stroke="#fff" fill="none" /><path d="M1.500 14h5L4 17z" fill="#fff" />
          </svg>
        </Langbar>
        <Tray>
          <Dual a="#ffd88a" b="#e8c8a0" />
          <Magnifier handle="#c03a1c" s={16} />
          <svg width="18" height="16">
            <path d="M1 3h8v7H1z" fill="#ffd88a" stroke="#8c5a38" /><path d="M2 12h7v2H2z" fill="#eed8c0" />
            <path d="M11 4q2 2.500 0 5M13.500 2q3 4 0 8M16 1q3 5 0 10" stroke="#2fa82c" fill="none" strokeWidth="1.300" />
          </svg>
          <svg width="17" height="16">
            <path d="M6 1h8v7H6zM1 5h8v6H1z" fill="#5a3a3a" stroke="#c8a088" /><path d="M2 12h6v3H2z" fill="#c8b0a0" />
            <path d="M8 7l7 8m0-8l-7 8" stroke="#2438e0" strokeWidth="2" />
          </svg>
          <Bubble f="#6a6a68" />
          <svg width="16" height="16">
            <path d="M8 .5q3 2 6 2 0 9-6 13-6-4-6-13 3 0 6-2z" fill="#3cb8ec" stroke="#dff4fc" /><path d="M8 4v5M8 10.500v2" stroke="#fff" strokeWidth="2" />
          </svg>
          <svg width="16" height="16">
            <circle cx="7" cy="7" r="5.500" fill="#c8c8c8" stroke="#555" strokeWidth="1.500" /><circle cx="7" cy="7" r="2.500" fill="#555" />
            <path d="M10 14l4-4M12 16l4-5" stroke="#e8643c" />
          </svg>
          <svg width="16" height="16">
            <path d="M1 10l8-8 6 6-8 7z" fill="#35b8b0" stroke="#0c5c60" /><path d="M4 10l6-5M6 12l6-5" stroke="#0c5c60" /><path d="M8 7h3v2H8z" fill="#f04020" />
          </svg>
          <svg width="16" height="16">
            <path d="M.8.8h14.400v14.400H.8z" fill="#f4f4f4" stroke="#111" strokeWidth="1.500" /><path d="M2 2l6 4-6 4z" fill="#18a818" />
            <path d="M2 11h5v4H2zM8 7h6v1H8zM8 9h6v5H8z" fill="#666" />
          </svg>
          <Clock $ls={-0.1}>11:09 AM</Clock>
        </Tray>
      </Taskbar>
    </Screen>
  );
}
